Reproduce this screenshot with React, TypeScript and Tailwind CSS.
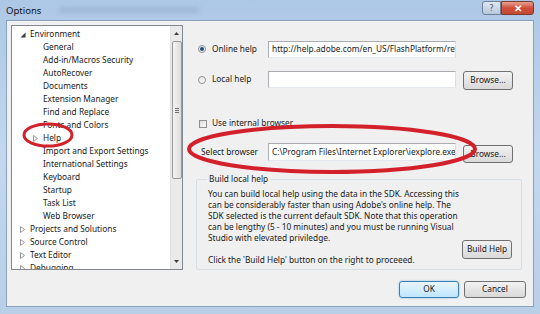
const treeItems: { label: string; level: number; tri?: "open" | "closed" }[] = [
  { label: "Environment", level: 0, tri: "open" },
  { label: "General", level: 1 },
  { label: "Add-in/Macros Security", level: 1 },
  { label: "AutoRecover", level: 1 },
  { label: "Documents", level: 1 },
  { label: "Extension Manager", level: 1 },
  { label: "Find and Replace", level: 1 },
  { label: "Fonts and Colors", level: 1 },
  { label: "Help", level: 1, tri: "closed" },
  { label: "Import and Export Settings", level: 1 },
  { label: "International Settings", level: 1 },
  { label: "Keyboard", level: 1 },
  { label: "Startup", level: 1 },
  { label: "Task List", level: 1 },
  { label: "Web Browser", level: 1 },
  { label: "Projects and Solutions", level: 0, tri: "closed" },
  { label: "Source Control", level: 0, tri: "closed" },
  { label: "Text Editor", level: 0, tri: "closed" },
  { label: "Debugging", level: 0, tri: "closed" },
];

const Tri = ({ kind }: { kind?: "open" | "closed" }) => {
  if (kind === "open")
    return (
      <svg width="6" height="6" viewBox="0 0 6 6">
        <path d="M5.5 0.5 L5.5 5.5 L0.5 5.5 Z" fill="#3a3a3a" />
      </svg>
    );
  if (kind === "closed")
    return (
      <svg width="5" height="7" viewBox="0 0 5 7">
        <path d="M0.5 0.5 L4.5 3.5 L0.5 6.5 Z" fill="none" stroke="#9a9a9a" />
      </svg>
    );
  return null;
};

const Btn = ({ label, w, primary }: { label: string; w: string; primary?: boolean }) => (
  <div
    className={`${w} flex items-center justify-center rounded-[3px] border text-[#1a1a1a] ${
      primary
        ? "border-[#3c7fb1] bg-gradient-to-b from-[#eaf6fd] to-[#bee6fd] shadow-[0_0_2px_#6fb7e8]"
        : "border-[#707070] bg-gradient-to-b from-[#f2f2f2] to-[#d9d9d9]"
    }`}
  >
    {label}
  </div>
);

const Field = ({ value, h }: { value: string; h: string }) => (
  <div
    className={`w-[188px] ${h} border border-[#abadb3] border-b-[#e3e9ef] border-r-[#dbdfe6] bg-white flex items-center px-[3px] overflow-hidden whitespace-nowrap text-[#1a1a1a]`}
  >
    {value}
  </div>
);

const Radio = ({ on }: { on?: boolean }) => (
  <div className="w-[8px] h-[8px] rounded-full border border-[#8e8f8f] bg-gradient-to-br from-[#e6e6e6] to-[#fafafa] flex items-center justify-center">
    {on && <div className="w-[4px] h-[4px] rounded-full bg-[#1d4e85]" />}
  </div>
);

export default function App() {
  return (
    <div className="relative w-[540px] h-[314px] overflow-hidden bg-gradient-to-b from-[#adc7e6] via-[#c3d8ef] to-[#b9cfe8] flex flex-col font-['Noto_Sans',sans-serif] text-[8.3px] leading-none text-[#1a1a1a]">
      {/* title bar */}
      <div className="h-[20px] flex items-start">
        <div className="pl-[6px] pt-[6px] text-[9.5px] text-[#111]">Options</div>
        <div className="ml-[18px] mt-[7px] w-[140px] h-[6px] rounded-full bg-[#9fb8d6] blur-[2px]" />
        <div className="flex-1" />
        <div className="mt-[1px] w-[19px] h-[14px] border border-[#6f7f95] rounded-l-[3px] bg-gradient-to-b from-[#dfe8f3] to-[#b7c8dc] flex items-center justify-center text-[8px] text-[#3c4b5e]">
          ?
        </div>
        <div className="mt-[1px] mr-[6px] w-[33px] h-[14px] border border-[#7b3a30] rounded-r-[3px] bg-gradient-to-b from-[#e8a192] via-[#cf4d38] to-[#c44a33] flex items-center justify-center text-[10px] font-bold text-white">
          ✕
        </div>
      </div>

      {/* client */}
      <div className="flex-1 mx-[6px] mb-[7px] bg-[#f0f0f0] border border-[#8aa1bd] flex flex-col">
        <div className="flex mt-[4px]">
          {/* tree */}
          <div className="ml-[4px] w-[172px] h-[245px] bg-white border border-[#828790] flex">
            <div className="flex-1 pt-[2px] overflow-hidden">
              {treeItems.map((it) => (
                <div
                  key={it.label}
                  className={`h-[13px] flex items-center whitespace-nowrap ${it.level === 0 ? "pl-[8px]" : "pl-[21px]"}`}
                >
                  <div className="w-[10px] flex items-center">
                    <Tri kind={it.tri} />
                  </div>
                  <span>{it.label}</span>
                </div>
              ))}
            </div>
            {/* scrollbar */}
            <div className="w-[12px] bg-[#eaeaea] border-l border-[#e0e0e0] flex flex-col items-center">
              <div className="h-[15px] flex items-center justify-center">
                <svg width="5" height="3" viewBox="0 0 5 3">
                  <path d="M0 3 L2.5 0 L5 3 Z" fill="#404040" />
                </svg>
              </div>
              <div className="w-[10px] h-[138px] rounded-[2px] border border-[#9a9a9a] bg-gradient-to-r from-[#f4f4f4] to-[#dcdcdc] flex flex-col items-center justify-center gap-[1px]">
                <div className="w-[4px] h-px bg-[#707070]" />
                <div className="w-[4px] h-px bg-[#707070]" />
                <div className="w-[4px] h-px bg-[#707070]" />
              </div>
              <div className="flex-1" />
              <div className="h-[15px] flex items-center justify-center">
                <svg width="5" height="3" viewBox="0 0 5 3">
                  <path d="M0 0 L2.5 3 L5 0 Z" fill="#404040" />
                </svg>
              </div>
            </div>
          </div>

          {/* right panel */}
          <div className="ml-[13px] w-[326px] flex flex-col">
            <div className="mt-[16px] flex items-center">
              <div className="w-[72px] flex items-center pl-[2px] gap-[6px]">
                <Radio on />
                <span>Online help</span>
              </div>
              <Field h="h-[17px]" value="http://help.adobe.com/en_US/FlashPlatform/reference" />
            </div>
            <div className="mt-[13px] flex items-start">
              <div className="w-[72px] h-[17px] flex items-center pl-[2px] gap-[6px]">
                <Radio />
                <span>Local help</span>
              </div>
              <Field h="h-[17px]" value="" />
              <div className="ml-[7px] h-[19px] flex">
                <Btn label="Browse..." w="w-[50px]" />
              </div>
            </div>
            <div className="mt-[27px] h-[13px] flex items-center pl-[3px] gap-[5px]">
              <div className="w-[8px] h-[8px] border border-[#8e8f8f] bg-gradient-to-br from-[#dcdcdc] to-[#fbfbfb]" />
              <span>Use internal browser</span>
            </div>
            <div className="mt-[13px] flex items-start">
              <div className="w-[72px] h-[18px] flex items-center pl-[5px]">Select browser</div>
              <Field h="h-[18px]" value="C:\Program Files\Internet Explorer\iexplore.exe" />
              <div className="ml-[7px] mt-[2px] h-[18px] flex">
                <Btn label="Browse..." w="w-[50px]" />
              </div>
            </div>
            <fieldset className="mt-[10px] h-[97px] border border-[#d5dfe5] rounded-[2px]">
              <legend className="ml-[10px] px-[2px] leading-[12px]">Build local help</legend>
              <div className="flex pl-[11px] pt-[3px]">
                <div className="w-[254px] leading-[11px] whitespace-nowrap">
                  <div>You can build local help using the data in the SDK. Accessing this</div>
                  <div>can be considerably faster than using Adobe's online help. The</div>
                  <div>SDK selected is the current default SDK. Note that this operation</div>
                  <div>can be lengthy (5 - 10 minutes) and you must be running Visual</div>
                  <div>Studio with elevated priviledge.</div>
                  <div>&nbsp;</div>
                  <div>Click the 'Build Help' button on the right to proceeed.</div>
                </div>
                <div className="mt-[52px] h-[19px] flex">
                  <Btn label="Build Help" w="w-[50px]" />
                </div>
              </div>
            </fieldset>
          </div>
        </div>

        <div className="mt-[11px] mr-[7px] h-[17px] flex justify-end gap-[5px]">
          <Btn label="OK" w="w-[60px]" primary />
          <Btn label="Cancel" w="w-[62px]" />
        </div>
      </div>

      {/* red annotation ellipses */}
      <svg className="absolute inset-0 pointer-events-none" width="540" height="314">
        <ellipse cx="48" cy="135" rx="24" ry="11" fill="none" stroke="#d3212b" strokeWidth="3" />
        <ellipse cx="332" cy="149" rx="143" ry="23" fill="none" stroke="#d3212b" strokeWidth="4" />
      </svg>
    </div>
  );
}
